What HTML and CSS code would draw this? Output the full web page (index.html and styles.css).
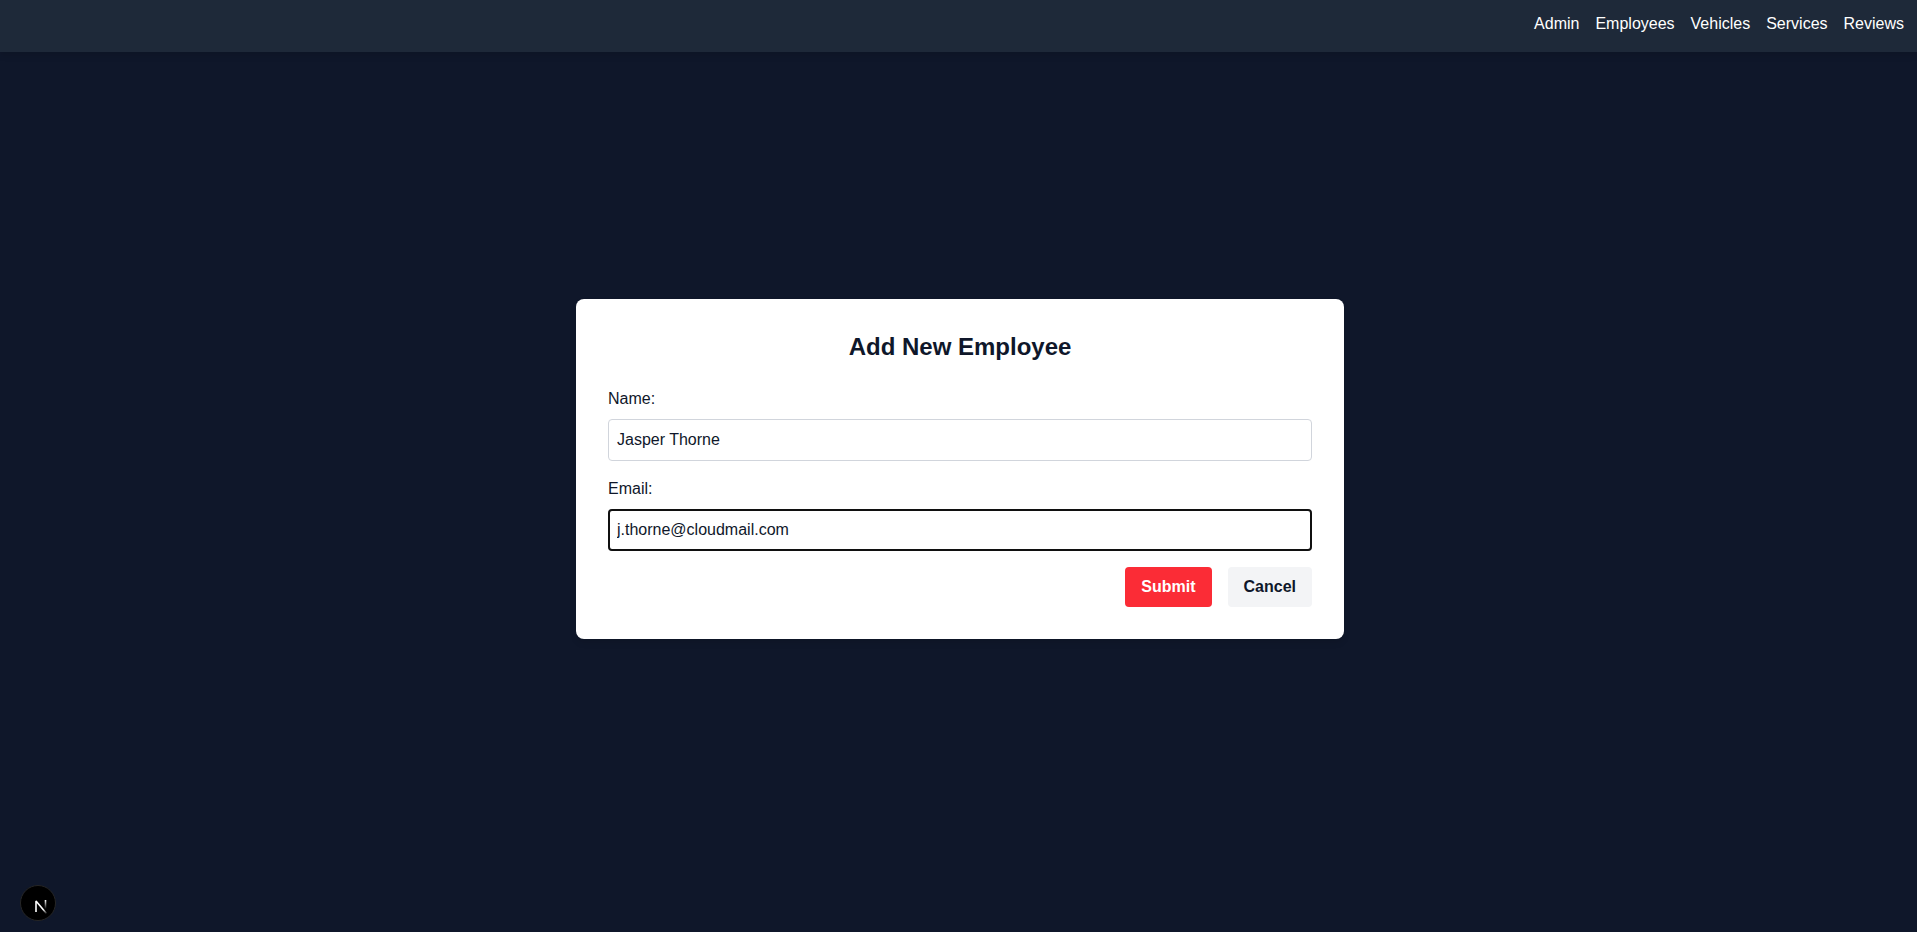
FILE: index.html
```html
<!DOCTYPE html>
<html lang="en">
<head>
  <meta charset="utf-8">
  <meta name="viewport" content="width=device-width, initial-scale=1">
  <title>Add New Employee</title>
  <link rel="stylesheet" href="styles.css">
</head>
<body>
  <header class="navbar">
    <nav class="nav-links" aria-label="Main">
      <a href="#admin">Admin</a>
      <a href="#employees">Employees</a>
      <a href="#vehicles">Vehicles</a>
      <a href="#services">Services</a>
      <a href="#reviews">Reviews</a>
    </nav>
  </header>
  <main class="page">
    <form class="card">
      <h1 class="card-title">Add New Employee</h1>
      <div class="field">
        <label for="name">Name:</label>
        <input class="input" id="name" type="text" value="Jasper Thorne">
      </div>
      <div class="field">
        <label for="email">Email:</label>
        <input class="input input-active" id="email" type="email" value="j.thorne@cloudmail.com">
      </div>
      <div class="actions">
        <button class="button button-primary" type="submit">Submit</button>
        <button class="button button-secondary" type="button">Cancel</button>
      </div>
    </form>
  </main>
  <button class="dev-badge" type="button" aria-label="Open developer tools">
    <svg width="40" height="40" viewBox="0 0 40 40" fill="none" aria-hidden="true">
      <defs>
        <linearGradient id="diagonal" x1="20" y1="20" x2="26" y2="28" gradientUnits="userSpaceOnUse">
          <stop offset="0.4" stop-color="#fff"/>
          <stop offset="1" stop-color="#fff" stop-opacity="0"/>
        </linearGradient>
        <linearGradient id="stem" x1="25" y1="14" x2="25" y2="23" gradientUnits="userSpaceOnUse">
          <stop stop-color="#fff"/>
          <stop offset="1" stop-color="#fff" stop-opacity="0"/>
        </linearGradient>
      </defs>
      <path d="M15 26V15L25.500 27.500" stroke="url(#diagonal)" stroke-width="1.600" stroke-linejoin="bevel"/>
      <path d="M24.500 14V23" stroke="url(#stem)" stroke-width="1.600"/>
    </svg>
  </button>
</body>
</html>
```
FILE: styles.css
```css
*,
*::before,
*::after {
  box-sizing: border-box;
}

body {
  display: flex;
  flex-direction: column;
  min-height: 100vh;
  margin: 0;
  background: #0f172a;
  color: #0f172a;
  font: 16px/24px "Liberation Sans", Arial, sans-serif;
}

.navbar {
  padding: 12px 13px 16px;
  background: #1e2939;
  box-shadow: 0 4px 6px rgba(0, 0, 0, 0.1);
}

.nav-links {
  display: flex;
  justify-content: flex-end;
  gap: 16px;
}

.nav-links a {
  color: #fff;
  text-decoration: none;
}

.page {
  display: flex;
  flex: 1;
  align-items: center;
  justify-content: center;
  padding: 0 0 46px 3px;
}

.card {
  width: 100%;
  max-width: 768px;
  padding: 32px;
  border-radius: 8px;
  background: #fff;
  box-shadow: 0 4px 6px rgba(0, 0, 0, 0.1);
}

.card-title {
  margin: 0 0 24px;
  font-size: 24px;
  line-height: 32px;
  text-align: center;
}

.field {
  display: flex;
  flex-direction: column;
  gap: 8px;
  margin-bottom: 16px;
}

.input {
  width: 100%;
  padding: 8px;
  border: 1px solid #d1d5dc;
  border-radius: 4px;
  background: #fff;
  color: inherit;
  font: inherit;
  height: 42px;
}

.input-active,
.input:focus {
  outline: 2px solid #101010;
  outline-offset: -2px;
}

.actions {
  display: flex;
  justify-content: flex-end;
  gap: 16px;
}

.button {
  padding: 8px 16px;
  border: 0;
  border-radius: 4px;
  font: inherit;
  font-weight: 700;
  cursor: pointer;
}

.button-primary {
  background: #fb2c36;
  color: #fff;
}

.button-secondary {
  background: #f3f4f6;
  color: inherit;
}

.dev-badge {
  position: fixed;
  bottom: 11px;
  left: 20px;
  display: grid;
  place-items: center;
  width: 36px;
  height: 36px;
  padding: 0;
  border: 1px solid #262626;
  border-radius: 50%;
  background: #000;
  cursor: pointer;
}
```
